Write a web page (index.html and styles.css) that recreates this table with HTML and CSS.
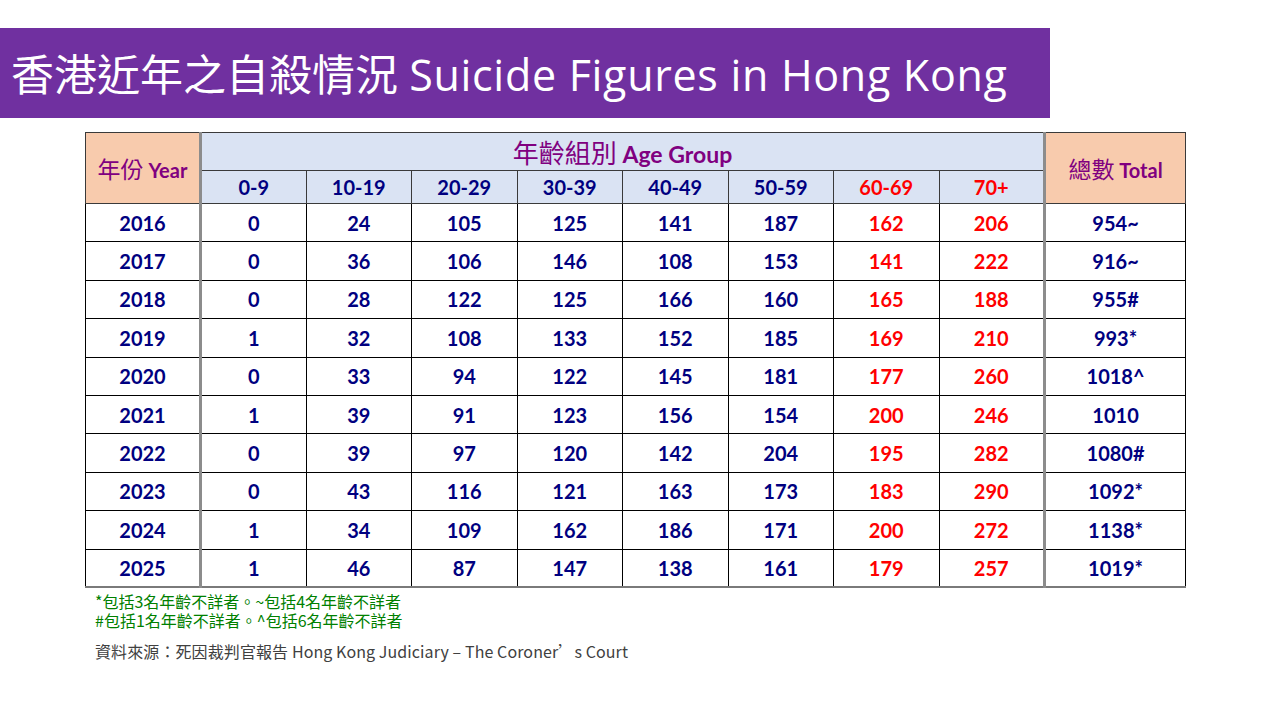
FILE: index.html
```html
<!DOCTYPE html>
<html lang="zh-Hant">
<head>
<meta charset="utf-8">
<title>香港近年之自殺情況</title>
<link rel="stylesheet" href="styles.css">
</head>
<body>
<header class="banner">
  <h1 class="title"><span class="title-zh">香港近年之自殺情況</span> <span class="title-en">Suicide Figures in Hong Kong</span></h1>
</header>
<main class="content">
  <table class="stats">
    <colgroup>
      <col class="c-year">
      <col class="c-age" span="8">
      <col class="c-total">
    </colgroup>
    <thead>
      <tr class="h1">
        <th rowspan="2" class="corner year-h"><span class="zh">年份</span> Year</th>
        <th colspan="8" class="group"><span class="zh">年齡組別</span> Age Group</th>
        <th rowspan="2" class="corner total-h"><span class="zh">總數</span> Total</th>
      </tr>
      <tr class="h2">
        <th>0-9</th><th>10-19</th><th>20-29</th><th>30-39</th><th>40-49</th><th>50-59</th><th class="old">60-69</th><th class="old">70+</th>
      </tr>
    </thead>
    <tbody>
      <tr><td class="year">2016</td><td>0</td><td>24</td><td>105</td><td>125</td><td>141</td><td>187</td><td class="old">162</td><td class="old">206</td><td class="total">954~</td></tr>
      <tr><td class="year">2017</td><td>0</td><td>36</td><td>106</td><td>146</td><td>108</td><td>153</td><td class="old">141</td><td class="old">222</td><td class="total">916~</td></tr>
      <tr><td class="year">2018</td><td>0</td><td>28</td><td>122</td><td>125</td><td>166</td><td>160</td><td class="old">165</td><td class="old">188</td><td class="total">955#</td></tr>
      <tr><td class="year">2019</td><td>1</td><td>32</td><td>108</td><td>133</td><td>152</td><td>185</td><td class="old">169</td><td class="old">210</td><td class="total">993*</td></tr>
      <tr><td class="year">2020</td><td>0</td><td>33</td><td>94</td><td>122</td><td>145</td><td>181</td><td class="old">177</td><td class="old">260</td><td class="total">1018^</td></tr>
      <tr><td class="year">2021</td><td>1</td><td>39</td><td>91</td><td>123</td><td>156</td><td>154</td><td class="old">200</td><td class="old">246</td><td class="total">1010</td></tr>
      <tr><td class="year">2022</td><td>0</td><td>39</td><td>97</td><td>120</td><td>142</td><td>204</td><td class="old">195</td><td class="old">282</td><td class="total">1080#</td></tr>
      <tr><td class="year">2023</td><td>0</td><td>43</td><td>116</td><td>121</td><td>163</td><td>173</td><td class="old">183</td><td class="old">290</td><td class="total">1092*</td></tr>
      <tr><td class="year">2024</td><td>1</td><td>34</td><td>109</td><td>162</td><td>186</td><td>171</td><td class="old">200</td><td class="old">272</td><td class="total">1138*</td></tr>
      <tr class="last"><td class="year">2025</td><td>1</td><td>46</td><td>87</td><td>147</td><td>138</td><td>161</td><td class="old">179</td><td class="old">257</td><td class="total">1019*</td></tr>
    </tbody>
  </table>
  <div class="notes">
    <p>*包括3名年齡不詳者。~包括4名年齡不詳者</p>
    <p>#包括1名年齡不詳者。^包括6名年齡不詳者</p>
  </div>
  <p class="source">資料來源：死因裁判官報告 Hong Kong Judiciary – The Coroner’s Court</p>
</main>
</body>
</html>
```

FILE: styles.css
```css
html, body {
  margin: 0;
  padding: 0;
  background: #ffffff;
}

body {
  width: 1280px;
  height: 720px;
  overflow: hidden;
  font-family: "Lato", "Noto Sans CJK TC", sans-serif;
}

.banner {
  margin-top: 28px;
  width: 1050px;
  height: 90px;
  background: #7030a0;
  display: flex;
  align-items: center;
}

.title {
  margin: 0 0 0 11px;
  font-family: "Open Sans", "Noto Sans CJK TC", sans-serif;
  font-weight: 400;
  font-size: 43px;
  line-height: 1;
  color: #ffffff;
  white-space: nowrap;
}

.title-zh {
  font-family: "Noto Sans CJK TC", sans-serif;
}

.title-en {
  letter-spacing: 0.7px;
}

.content {
  padding-left: 85px;
  padding-top: 14px;
}

.stats {
  width: 1100px;
  table-layout: fixed;
  border-collapse: collapse;
  font-family: "Lato", "Noto Sans CJK TC", sans-serif;
  font-weight: 700;
  text-align: center;
}

.c-year { width: 115px; }
.c-age { width: 105.5px; }
.c-total { width: 141px; }

.stats th,
.stats td {
  padding: 0;
  border: 1px solid #000000;
  vertical-align: middle;
}

.stats thead th {
  border-color: #3a3a3a;
}

.h1 { height: 38px; }
.h2 { height: 33px; }
.stats tbody tr { height: 38.4px; }

.corner {
  background: #f8cbad;
  color: #800080;
  font-size: 20px;
}

.year-h { border-right: 3px solid #8c8c8c !important; }
.total-h { border-left: 3px solid #8c8c8c !important; }

.zh {
  font-family: "Noto Sans CJK TC", sans-serif;
  font-weight: 400;
  font-size: 23px;
}

.group {
  background: #dae3f3;
  color: #800080;
  font-size: 23px;
}

.group .zh {
  font-size: 26px;
}

.h2 th {
  background: #dae3f3;
  color: #000080;
  font-size: 20px;
}

.stats td {
  color: #000080;
  font-size: 20px;
}

.stats .old {
  color: #ff0000;
}

.stats td.year {
  border-right: 3px solid #8c8c8c;
}

.stats td.total {
  border-left: 3px solid #8c8c8c;
}

.stats tr.last td {
  border-bottom: 2px solid #7a7a7a;
}

.notes {
  margin: 4px 0 0 10px;
  color: #008000;
  font-family: "Noto Sans CJK TC", sans-serif;
  font-size: 16px;
  line-height: 19px;
}

.notes p {
  margin: 0;
  height: 19px;
  overflow: visible;
}

.source {
  margin: 11px 0 0 10px;
  color: #404040;
  font-family: "Noto Sans CJK TC", sans-serif;
  font-size: 16px;
  line-height: 20px;
  letter-spacing: 0.1px;
}
```
